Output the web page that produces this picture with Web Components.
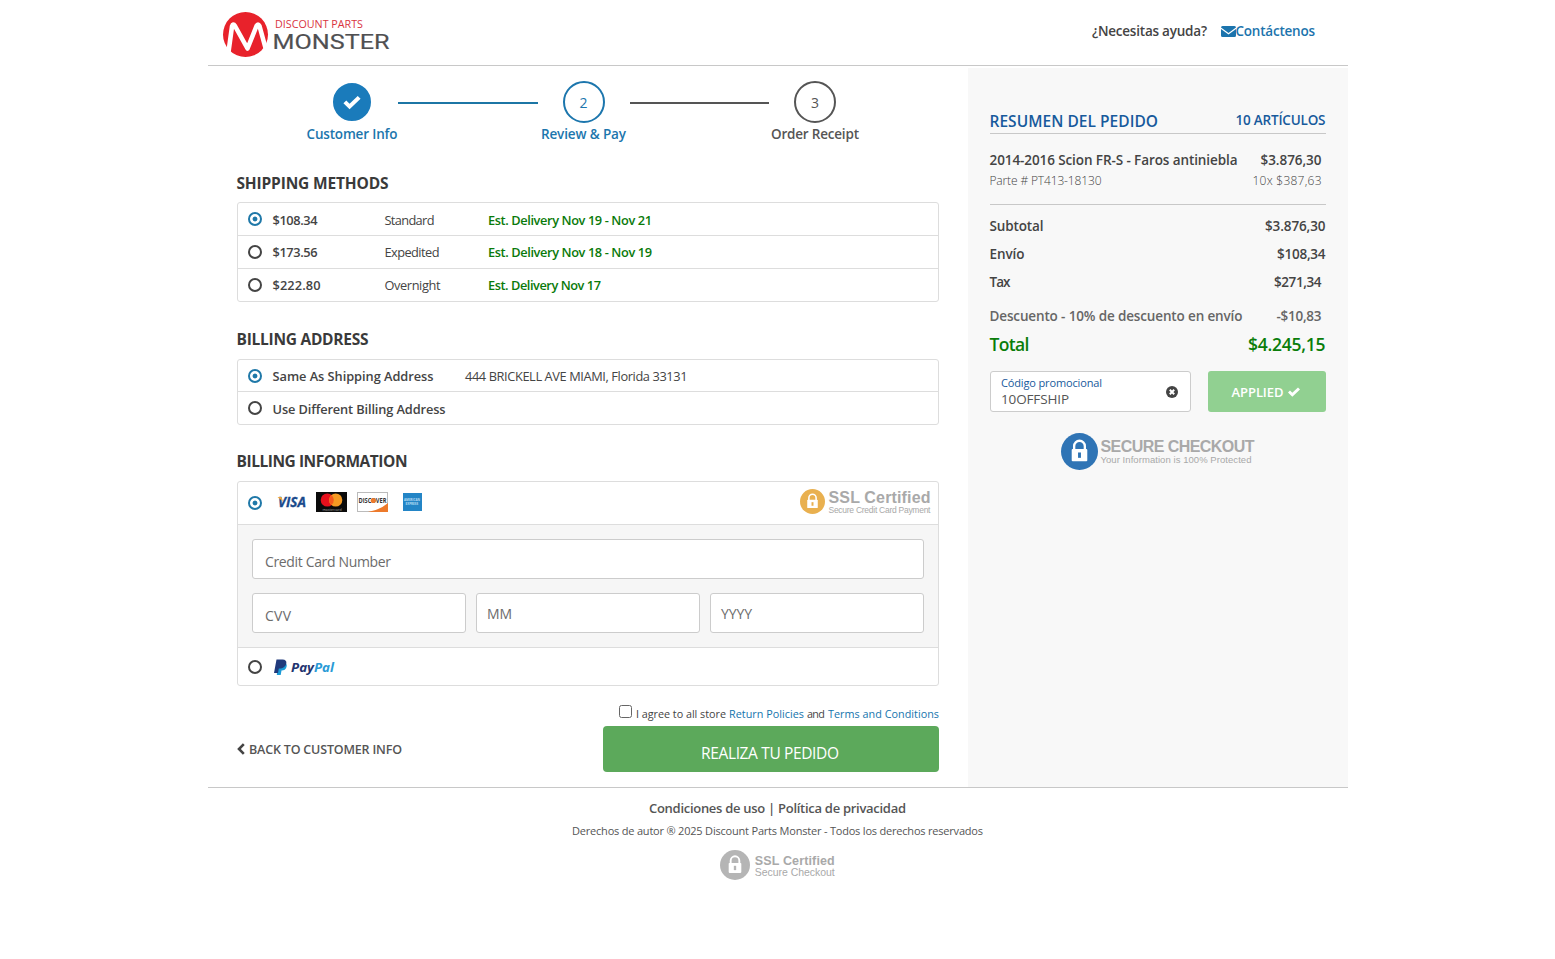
<!DOCTYPE html>
<html lang="es">
<head>
<meta charset="utf-8">
<title>Discount Parts Monster - Checkout</title>
<style>
    body {
        margin: 0;
        background: #fff;
        color: #444;
        font-family: "Open Sans", "Noto Sans", sans-serif;
        font-size: 13px;
    }
</style>
</head>
<body>
<checkout-page></checkout-page>

<script>
// Registers an element whose shadow root is a clone of the given markup
function define(name, html, setup) {
    const template = document.createElement("template");
    template.innerHTML = html;
    customElements.define(name, class extends HTMLElement {
        constructor() {
            super();
            this.attachShadow({ mode: "open" });
            this.shadowRoot.appendChild(template.content.cloneNode(true));
        }
        connectedCallback() {
            if (setup) {
                setup(this, this.shadowRoot);
            }
        }
    });
}

const CHECK = '<path d="M1 5.6 3 3.6 5.3 5.8 11 .4 13 2.4 5.3 9.8Z" fill="#fff"/>';

define("checkout-page", `
<style>
    :host { display: block; width: 1140px; margin: 0 auto; }
    main { display: flex; height: 721px; border-bottom: 1px solid #c8c8c8; }
    .left { width: 702px; padding: 0 28.5px 0 29.5px; }
    aside { width: 336px; padding: 42px 22px 0; background: #f8f8f8; margin-top: 2px; }
    h2 { margin: 0 0 0 -0.5px; font-size: 15.5px; line-height: 20px; height: 20px; font-weight: 700; color: #3a3a3a; }
    .price { width: 112px; font-weight: 550; }
    .kind { width: 103.5px; }
    .eta { color: #0a7a0a; font-weight: 550; }
    .same { width: 192.5px; font-weight: 550; }
    .fields { background: #f6f6f6; border-bottom: 1px solid #ddd; padding: 14px; height: 94px; display: flex; flex-direction: column; gap: 14px; }
    .trio { display: flex; gap: 10px; }
    .agree { display: flex; justify-content: flex-end; align-items: center; font-size: 10.8px; height: 14px; margin-top: 21px; gap: 3px; line-height: 14px; }
    .agree i { box-sizing: border-box; width: 13px; height: 13px; border: 1px solid #666; border-radius: 2.5px; margin: -5px 1px 0 0; background: #fff; }
    .agree b { color: #1474ad; font-weight: 500; }
    .actions { display: flex; justify-content: space-between; margin-top: 5px; height: 46px; align-items: center; }
    .back { display: flex; align-items: center; gap: 4px; font-weight: 550; color: #555; font-size: 12.5px; }
    .order { width: 336px; height: 46px; border-radius: 4px; background: #5ca95b; color: #fff; display: flex; align-items: center; justify-content: center; font-size: 15.5px; padding: 7px 2px 0 0; box-sizing: border-box; }
    footer { display: flex; flex-direction: column; align-items: center; color: #555; }
    footer p { margin: 0; height: 20px; line-height: 20px; }
</style>
<site-header></site-header>
<main>
    <div class="left">
        <step-bar></step-bar>
        <h2><fit-text w="152">SHIPPING METHODS</fit-text></h2>
        <option-box style="margin-top:9px">
            <option-row checked drop="2" style="height:32px"><span class="price"><fit-text w="45">$108.34</fit-text></span><span class="kind"><fit-text w="50">Standard</fit-text></span><span class="eta"><fit-text w="164">Est. Delivery Nov 19 - Nov 21</fit-text></span></option-row>
            <option-row style="height:32px"><span class="price"><fit-text w="45">$173.56</fit-text></span><span class="kind"><fit-text w="55">Expedited</fit-text></span><span class="eta"><fit-text w="164">Est. Delivery Nov 18 - Nov 19</fit-text></span></option-row>
            <option-row style="height:32px"><span class="price"><fit-text w="48">$222.80</fit-text></span><span class="kind"><fit-text w="56">Overnight</fit-text></span><span class="eta"><fit-text w="113">Est. Delivery Nov 17</fit-text></span></option-row>
        </option-box>

        <h2 style="margin-top:27px"><fit-text w="132">BILLING ADDRESS</fit-text></h2>
        <option-box style="margin-top:10px">
            <option-row checked drop="1" style="height:31px"><span class="same"><fit-text w="161">Same As Shipping Address</fit-text></span><fit-text w="222.5">444 BRICKELL AVE MIAMI, Florida 33131</fit-text></option-row>
            <option-row drop="2" style="height:32px"><span class="same"><fit-text w="173">Use Different Billing Address</fit-text></span></option-row>
        </option-box>

        <h2 style="margin-top:26px"><fit-text w="171">BILLING INFORMATION</fit-text></h2>
        <option-box style="margin-top:10px">
            <option-row checked style="height:42px"><card-logos></card-logos><trust-badge size="25" color="#e9b04f" label="SSL Certified" note="Secure Credit Card Payment" width="102" title-size="16" note-size="8.5" gap="3" drop="1" style="margin:-3px 7.5px 0 auto"></trust-badge></option-row>
            <div class="fields">
                <text-field style="width:672px" indent="12" drop="4"><fit-text w="126">Credit Card Number</fit-text></text-field>
                <div class="trio">
                    <text-field style="width:214px" indent="12" drop="4"><fit-text w="26">CVV</fit-text></text-field>
                    <text-field style="width:224px" indent="10" drop="0"><fit-text w="25">MM</fit-text></text-field>
                    <text-field style="width:214px" indent="10" drop="0"><fit-text w="31">YYYY</fit-text></text-field>
                </div>
            </div>
            <option-row style="height:37px"><paypal-logo></paypal-logo></option-row>
        </option-box>

        <div class="agree"><i></i><fit-text w="90">I agree to all store</fit-text><b><fit-text w="75">Return Policies</fit-text></b><fit-text w="18">and</fit-text><b><fit-text w="111">Terms and Conditions</fit-text></b></div>
        <div class="actions">
            <div class="back"><svg width="8" height="12" viewBox="0 0 8 12"><path d="M6.800 1.200 2 6l4.800 4.800" fill="none" stroke="#444" stroke-width="2.600"/></svg><fit-text w="153">BACK TO CUSTOMER INFO</fit-text></div>
            <div class="order"><fit-text w="138">REALIZA TU PEDIDO</fit-text></div>
        </div>
    </div>
    <aside><order-summary></order-summary></aside>
</main>
<footer>
    <p style="margin-top:10px;font-weight:550;font-size:13px"><fit-text w="257">Condiciones de uso | Política de privacidad</fit-text></p>
    <p style="margin-top:3px;font-size:11px"><fit-text w="411">Derechos de autor ® 2025 Discount Parts Monster - Todos los derechos reservados</fit-text></p>
    <trust-badge size="30" color="#b5b5b5" label="SSL Certified" note="Secure Checkout" width="80" title-size="12.5" note-size="10.5" gap="4.500" drop="2" style="margin-top:9px"></trust-badge>
</footer>`);

define("site-header", `
<style>
    :host { display: flex; height: 65px; border-bottom: 1px solid #c8c8c8; justify-content: space-between; }
    .logo { margin: 11px 0 0 15px; }
    .help { display: flex; align-items: center; height: 20px; margin: 21px 32.5px 0 0; font-weight: 550; font-size: 13.5px; }
    svg { display: block; }
    a { color: #1c74ad; }
</style>
<svg class="logo" width="170" height="48" viewBox="0 0 170 48">
    <circle cx="22.500" cy="23.500" r="22.500" fill="#e8222b"/>
    <path d="M5.500 41 9 15.500q1-3.500 3-.5L24.500 37.500 33.500 15q1.500-3 3 0L42.500 37" fill="none" stroke="#fff" stroke-width="4.600" stroke-linejoin="round"/>
    <text x="52" y="16.500" font-family="Open Sans" font-size="11.500" fill="#d9343f" textLength="88" lengthAdjust="spacingAndGlyphs">DISCOUNT PARTS</text>
    <text x="49.500" y="37.500" font-family="Roboto" font-size="20.500" fill="#505052" stroke="#505052" stroke-width=".15" textLength="117" lengthAdjust="spacingAndGlyphs">MONSTER</text>
</svg>
<div class="help">
    <fit-text w="115">¿Necesitas ayuda?</fit-text>
    <svg width="15" height="11" viewBox="0 0 15 11" style="margin-left:13.500px"><path d="M0 1.500Q0 0 1.500 0h12Q15 0 15 1.500L7.500 7ZM0 3l7.500 5.400L15 3v6.500q0 1.500-1.500 1.500h-12Q0 11 0 9.500Z" fill="#1c74ad"/></svg>
    <a><fit-text w="79.5">Contáctenos</fit-text></a>
</div>`);

define("step-bar", `
<style>
    :host { display: flex; height: 107px; padding-left: 69px; font-weight: 550; font-size: 13.5px; }
    .step { width: 92px; display: flex; flex-direction: column; align-items: center; padding-top: 15px; color: #555; }
    .dot { width: 38px; height: 38px; border: 2px solid; border-radius: 50%; display: flex; align-items: center; justify-content: center; font-weight: 400; font-size: 14px; }
    .step.active { color: #1c76ad; }
    .step.done .dot { background: #1a7bbb; border-color: #fff; }
    .label { line-height: 20px; margin-top: 1px; }
    .line { width: 139.5px; height: 2px; margin-top: 36px; background: #555; }
    .line.done { background: #1c76a5; }
</style>
<div class="step active done"><div class="dot"><svg width="20" height="15" viewBox="0 0 14 10">${CHECK}</svg></div><fit-text class="label" w="91">Customer Info</fit-text></div>
<div class="line done"></div>
<div class="step active"><div class="dot">2</div><fit-text class="label" w="85">Review &amp; Pay</fit-text></div>
<div class="line"></div>
<div class="step"><div class="dot">3</div><fit-text class="label" w="88">Order Receipt</fit-text></div>`);

define("option-box", `
<style>
    :host { display: block; border: 1px solid #ddd; border-radius: 3px; background: #fff; }
    ::slotted(option-row:not(:last-child)) { border-bottom: 1px solid #ddd; }
</style>
<slot></slot>`);

define("option-row", `
<style>
    :host { display: flex; align-items: center; padding-left: 10px; font-size: 12.8px; }
    i { box-sizing: border-box; flex: none; width: 14px; height: 14px; border: 2px solid #444; border-radius: 50%; margin-right: 10.500px; background: #fff; }
    :host([checked]) i { border-color: #1f78a8; background: radial-gradient(circle, #1f78a8 2px, #fff 2.800px); }
    :host([drop="1"]) ::slotted(*) { padding-top: 1px; }
    :host([drop="2"]) ::slotted(*) { padding-top: 2px; }
</style>
<i></i><slot></slot>`);

define("text-field", `
<style>
    :host { display: flex; box-sizing: border-box; height: 40px; border: 1px solid #ccc; border-radius: 3px; background: #fff; align-items: center; font-size: 14px; color: #6c6c6c; }
</style>
<slot></slot>`, (host) => {
    host.style.paddingLeft = host.getAttribute("indent") + "px";
    host.style.paddingTop = host.getAttribute("drop") + "px";
});

define("card-logos", `
<style>
    :host { display: block; }
    svg { display: block; margin-top: -2px; }
</style>
<svg width="160" height="20" viewBox="0 0 160 20">
    <text x="5" y="15" font-family="Open Sans" font-weight="700" font-style="italic" font-size="14" fill="#1a4a8c" stroke="#1a4a8c" stroke-width=".3" textLength="28" lengthAdjust="spacingAndGlyphs">VISA</text>
    <path d="M4.500 5h4l1.500 4.500Z" fill="#eda63a"/>
    <rect x="43" width="31" height="20" fill="#0b0b0b"/>
    <circle cx="54.300" cy="8" r="6.600" fill="#e6101c"/>
    <circle cx="62.700" cy="8" r="6.600" fill="#f59a22"/>
    <path d="M58.500 3a6.600 6.600 0 0 1 0 10a6.600 6.600 0 0 1 0-10" fill="#f4591c"/>
    <text x="49.500" y="18.500" font-family="Open Sans" font-size="3.600" fill="#aaa">mastercard</text>
    <rect x="84.500" y=".5" width="30" height="19" fill="#fff" stroke="#bbb"/>
    <path d="M95 20q12-2 20-9v9Z" fill="#ed7a2b"/>
    <text x="85.500" y="11" font-family="Open Sans" font-weight="700" font-size="7" fill="#333" textLength="28" lengthAdjust="spacingAndGlyphs">DISCOVER</text>
    <circle cx="100.300" cy="8.500" r="2.600" fill="#ed7a2b"/>
    <rect x="130" y="1" width="19" height="18" fill="#2385c6"/>
    <text x="131" y="9.400" font-family="Open Sans" font-weight="700" font-size="3" fill="#b7dcf3">AMERICAN</text>
    <text x="132.500" y="13.400" font-family="Open Sans" font-weight="700" font-size="3" fill="#b7dcf3">EXPRESS</text>
</svg>`);

define("paypal-logo", `
<style>
    :host { display: block; }
    svg { display: block; }
</style>
<svg width="64" height="18" viewBox="0 0 64 18">
    <path d="M5 4.500h6.500q3 1 2 4.500t-5 3.500l-.8 4.500H3.800Z" fill="#1b9ad6"/>
    <path d="M3.500 1.500h6q4.500.3 3.800 4T8 10.500H5.800L5 15H1Z" fill="#203a7c"/>
    <text x="18" y="13.500" font-family="Open Sans" font-weight="700" font-style="italic" font-size="11.500" fill="#22346f" textLength="43" lengthAdjust="spacingAndGlyphs">Pay<tspan fill="#2a9bd6">Pal</tspan></text>
</svg>`);

// Round padlock seal with a title and a small note next to it
define("trust-badge", `
<style>
    :host { display: flex; align-items: center; font-family: "Liberation Sans", Arial, sans-serif; color: #a9a9a9; }
    .text { display: flex; flex-direction: column; }
    .title { font-weight: 700; line-height: 1; }
    .note { font-weight: 400; line-height: 1; }
    svg { display: block; }
</style>
<svg class="seal" viewBox="0 0 38 38">
    <circle cx="19" cy="19" r="19"/>
    <path d="M13.500 18v-4.500a5.500 5.500 0 0 1 11 0V18" fill="none" stroke="#fff" stroke-width="2.400"/>
    <rect x="11" y="16.500" width="16" height="12.500" rx="1" fill="#fff"/>
    <path class="key" d="M17.500 20h3v5.500h-3Z"/>
</svg>
<div class="text"><fit-text class="title"></fit-text><fit-text class="note"></fit-text></div>`, (host, root) => {
    const seal = root.querySelector(".seal");
    const title = root.querySelector(".title");
    const note = root.querySelector(".note");
    seal.setAttribute("width", host.getAttribute("size"));
    seal.setAttribute("height", host.getAttribute("size"));
    seal.setAttribute("fill", host.getAttribute("color"));
    seal.style.marginRight = host.getAttribute("gap") + "px";
    title.textContent = host.getAttribute("label");
    note.textContent = host.getAttribute("note");
    title.style.fontSize = host.getAttribute("title-size") + "px";
    note.style.fontSize = host.getAttribute("note-size") + "px";
    title.style.paddingTop = (host.getAttribute("drop") || 0) + "px";
    title.setAttribute("w", host.getAttribute("width"));
    note.setAttribute("w", host.getAttribute("note-width") || host.getAttribute("width"));
});

define("order-summary", `
<style>
    :host { display: block; font-size: 13.5px; font-weight: 550; color: #444; }
    .head { display: flex; justify-content: space-between; height: 23px; border-bottom: 1px solid #c8c8c8; color: #175a9c; line-height: 23px; }
    .head b { font-size: 15.500px; font-weight: 550; }
    .head span { line-height: 20px; }
    .items { height: 54px; padding-top: 16px; border-bottom: 1px solid #c8c8c8; }
    .promo { display: flex; justify-content: space-between; margin-top: 13px; }
    .code { box-sizing: border-box; width: 201px; height: 41px; border: 1px solid #ccc; border-radius: 3px; background: #fff; display: flex; align-items: center; justify-content: space-between; padding: 0 12px 0 10.500px; font-weight: 400; }
    .code div { display: flex; flex-direction: column; margin-top: -2px; }
    .code small { font-size: 11px; line-height: 16px; height: 16px; color: #175a9c; }
    .code span { line-height: 16px; height: 16px; color: #555; }
    .applied { width: 118px; height: 41px; border-radius: 3px; background: #91d091; color: #fff; display: flex; align-items: center; justify-content: center; gap: 4px; font-size: 13px; }
</style>
<div class="head"><b><fit-text w="168.5">RESUMEN DEL PEDIDO</fit-text></b><span><fit-text w="90">10 ARTÍCULOS</fit-text></span></div>
<div class="items">
    <summary-row inset><fit-text w="248">2014-2016 Scion FR-S - Faros antiniebla</fit-text><fit-text slot="amount" w="61">$3.876,30</fit-text></summary-row>
    <summary-row inset style="font-weight:300;font-size:12px;color:#444;height:21px"><fit-text w="112">Parte # PT413-18130</fit-text><fit-text slot="amount" w="69">10x $387,63</fit-text></summary-row>
</div>
<summary-row style="height:28px;margin-top:7px"><fit-text w="54">Subtotal</fit-text><fit-text slot="amount" w="60.5">$3.876,30</fit-text></summary-row>
<summary-row style="height:28px"><fit-text w="35">Envío</fit-text><fit-text slot="amount" w="48.5">$108,34</fit-text></summary-row>
<summary-row inset style="height:28px"><fit-text w="21">Tax</fit-text><fit-text slot="amount" w="47.5">$271,34</fit-text></summary-row>
<summary-row inset style="height:28px;margin-top:6px;color:#666"><fit-text w="253">Descuento - 10% de descuento en envío</fit-text><fit-text slot="amount" w="45">-$10,83</fit-text></summary-row>
<summary-row style="height:28px;font-size:17.5px;color:#0a7d0a"><fit-text w="40">Total</fit-text><fit-text slot="amount" w="77.5">$4.245,15</fit-text></summary-row>
<div class="promo">
    <div class="code">
        <div><small><fit-text w="101">Código promocional</fit-text></small><span><fit-text w="68">10OFFSHIP</fit-text></span></div>
        <svg width="12" height="12" viewBox="0 0 12 12"><circle cx="6" cy="6" r="6" fill="#444"/><path d="m3.800 3.800 4.400 4.400m0-4.400L3.800 8.200" stroke="#fff" stroke-width="2"/></svg>
    </div>
    <div class="applied"><fit-text w="52">APPLIED</fit-text><svg width="14" height="10" viewBox="0 0 14 10">${CHECK}</svg></div>
</div>
<trust-badge size="37" color="#2f74b5" label="SECURE CHECKOUT" note="Your Information is 100% Protected" width="154" note-width="151" title-size="16" note-size="9.500" gap="3" drop="1" style="margin:21px 0 0 71px"></trust-badge>`);

define("summary-row", `
<style>
    :host { display: flex; justify-content: space-between; align-items: center; height: 20px; line-height: 20px; }
    :host([inset]) { padding-right: 4px; }
</style>
<slot></slot><slot name="amount"></slot>`);

// Sets the tracking of its text so that the line is w pixels wide.
// Defined last: the fonts of all the hosts above are already in place.
define("fit-text", `
<style>
    :host { display: inline-block; white-space: nowrap; }
</style>
<slot></slot>`, (host) => {
    const range = document.createRange();
    range.selectNodeContents(host);
    const natural = range.getBoundingClientRect().width;
    const spacing = (host.getAttribute("w") - natural) / (host.textContent.length - 1);
    host.style.letterSpacing = spacing + "px";
    host.style.marginRight = -spacing + "px";
});
</script>
</body>
</html>
